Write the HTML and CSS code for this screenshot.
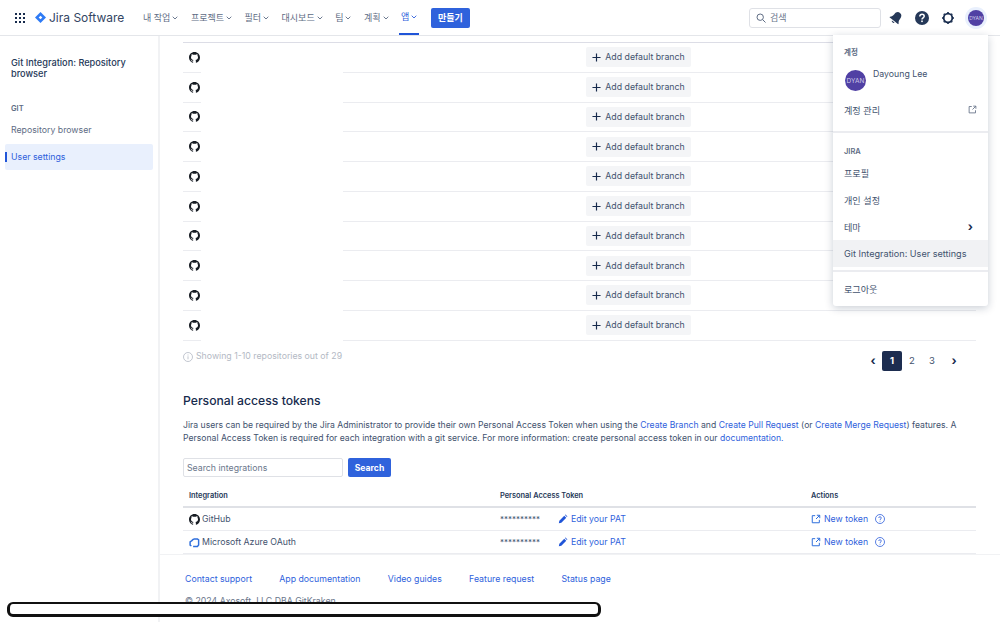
FILE: index.html
```html
<!DOCTYPE html>
<html lang="ko">
<head>
  <meta charset="UTF-8" />
  <title>Git Integration: User settings</title>
  <link rel="stylesheet" href="styles.css">
</head>
<body>
  <svg class="defs" width="0" height="0">
    <symbol id="gh" viewBox="0 0 16 16"><path d="M8 0C3.58 0 0 3.58 0 8c0 3.54 2.29 6.53 5.47 7.59.4.07.55-.17.55-.38 0-.19-.01-.82-.01-1.49-2.01.37-2.53-.49-2.69-.94-.09-.23-.48-.94-.82-1.13-.28-.15-.68-.52-.01-.53.63-.01 1.08.58 1.23.82.72 1.21 1.87.87 2.33.66.07-.52.28-.87.51-1.07-1.78-.2-3.64-.89-3.64-3.95 0-.87.31-1.59.82-2.15-.08-.2-.36-1.02.08-2.12 0 0 .67-.21 2.2.82.64-.18 1.32-.27 2-.27.68 0 1.36.09 2 .27 1.53-1.04 2.2-.82 2.2-.82.44 1.1.16 1.92.08 2.12.51.56.82 1.27.82 2.15 0 3.07-1.87 3.75-3.65 3.95.29.25.54.73.54 1.48 0 1.07-.01 1.93-.01 2.2 0 .21.15.46.55.38A8.013 8.013 0 0016 8c0-4.42-3.58-8-8-8z"/></symbol>
    <symbol id="chev" viewBox="0 0 6 6"><path d="M.7 1.700L3 4l2.300-2.300" fill="none" stroke="currentColor" stroke-width="0.9"/></symbol>
    <symbol id="ext" viewBox="0 0 12 12"><path d="M5 2H1.500v8.500H10V7M7 1.500h3.500V5M10.500 1.500L6 6" fill="none" stroke="currentColor" stroke-width="1.200"/></symbol>
    <symbol id="pen" viewBox="0 0 12 12"><path d="M1 11l.6-3L7.500 2.100 9.900 4.500 4 10.400zM8.300 1.300l.8-.6 2.200 2.200-.6.8z"/></symbol>
    <symbol id="plus" viewBox="0 0 10 10"><path d="M5 .5v9M.5 5h9" fill="none" stroke="currentColor" stroke-width="1.300"/></symbol>
  </svg>

  <header class="topbar">
    <svg class="apps" width="10" height="10" viewBox="0 0 10 10" fill="#172b4d"><rect width="2" height="2"/><rect x="4" width="2" height="2"/><rect x="8" width="2" height="2"/><rect y="4" width="2" height="2"/><rect x="4" y="4" width="2" height="2"/><rect x="8" y="4" width="2" height="2"/><rect y="8" width="2" height="2"/><rect x="4" y="8" width="2" height="2"/><rect x="8" y="8" width="2" height="2"/></svg>
    <div class="logo">
      <svg width="11" height="11" viewBox="0 0 12 12"><path d="M6 0l6 6-6 6-6-6z" fill="#2f7bf5"/><path d="M6 4L8 6 6 8 4 6z" fill="#fff"/></svg>
      <span>Jira Software</span>
    </div>
    <nav class="nav">
      <a>내 작업<svg><use href="#chev"/></svg></a>
      <a>프로젝트<svg><use href="#chev"/></svg></a>
      <a>필터<svg><use href="#chev"/></svg></a>
      <a>대시보드<svg><use href="#chev"/></svg></a>
      <a>팀<svg><use href="#chev"/></svg></a>
      <a>계획<svg><use href="#chev"/></svg></a>
      <a class="active">앱<svg><use href="#chev"/></svg></a>
    </nav>
    <button class="create">만들기</button>
    <div class="topright">
      <div class="search">
        <svg width="10" height="10" viewBox="0 0 10 10" fill="none" stroke="#5e6c84" stroke-width="1"><circle cx="4.200" cy="4.200" r="3.200"/><path d="M6.600 6.600L9.500 9.500"/></svg>
        <span>검색</span>
      </div>
      <svg class="ticon" width="14" height="14" viewBox="0 0 14 14" fill="#253858"><g transform="rotate(38 7 7)"><path d="M7 .5c2.600 0 3.700 2.200 3.700 4.500 0 2.200.5 3.400 1.800 4.700v.8H1.500v-.8C2.800 8.400 3.300 7.200 3.300 5 3.300 2.700 4.400.5 7 .5z"/><path d="M5.300 11.500h3.400C8.500 13 5.500 13 5.300 11.500z"/></g></svg>
      <svg class="ticon" width="14" height="14" viewBox="0 0 14 14"><circle cx="7" cy="7" r="7" fill="#253858"/><path d="M4.800 5.500C4.800 4.200 5.800 3.300 7 3.300s2.200.9 2.200 2C9.200 6.800 7 6.900 7 8.500" fill="none" stroke="#fff" stroke-width="1.500"/><rect x="6.200" y="9.500" width="1.600" height="1.600" fill="#fff"/></svg>
      <svg class="ticon" width="14" height="14" viewBox="0 0 14 14" fill="none" stroke="#172b4d"><circle cx="7" cy="7" r="4.300" stroke-width="1.800"/><path stroke-width="1.600" d="M7 1v1.200M7 11.800V13M1 7h1.200M11.800 7H13M2.800 2.800l.8.8M10.400 10.400l.8.8M2.800 11.200l.8-.8M10.400 3.600l.8-.8"/></svg>
      <div class="halo"><div class="avatar small">DYAN</div></div>
    </div>
  </header>

  <div class="layout">
    <aside class="sidebar">
      <h3 class="side-title">Git Integration: Repository browser</h3>
      <div class="side-label">GIT</div>
      <a class="side-link">Repository browser</a>
      <a class="side-link current">User settings</a>
    </aside>

    <div class="page">
      <main class="content">
        <div class="repos">
          <div class="repo"><div class="ic"><svg><use href="#gh"/></svg></div><div class="blank"></div><div class="act"><button class="add"><svg><use href="#plus"/></svg>Add default branch</button></div></div>
          <div class="repo"><div class="ic"><svg><use href="#gh"/></svg></div><div class="blank"></div><div class="act"><button class="add"><svg><use href="#plus"/></svg>Add default branch</button></div></div>
          <div class="repo"><div class="ic"><svg><use href="#gh"/></svg></div><div class="blank"></div><div class="act"><button class="add"><svg><use href="#plus"/></svg>Add default branch</button></div></div>
          <div class="repo"><div class="ic"><svg><use href="#gh"/></svg></div><div class="blank"></div><div class="act"><button class="add"><svg><use href="#plus"/></svg>Add default branch</button></div></div>
          <div class="repo"><div class="ic"><svg><use href="#gh"/></svg></div><div class="blank"></div><div class="act"><button class="add"><svg><use href="#plus"/></svg>Add default branch</button></div></div>
          <div class="repo"><div class="ic"><svg><use href="#gh"/></svg></div><div class="blank"></div><div class="act"><button class="add"><svg><use href="#plus"/></svg>Add default branch</button></div></div>
          <div class="repo"><div class="ic"><svg><use href="#gh"/></svg></div><div class="blank"></div><div class="act"><button class="add"><svg><use href="#plus"/></svg>Add default branch</button></div></div>
          <div class="repo"><div class="ic"><svg><use href="#gh"/></svg></div><div class="blank"></div><div class="act"><button class="add"><svg><use href="#plus"/></svg>Add default branch</button></div></div>
          <div class="repo"><div class="ic"><svg><use href="#gh"/></svg></div><div class="blank"></div><div class="act"><button class="add"><svg><use href="#plus"/></svg>Add default branch</button></div></div>
          <div class="repo"><div class="ic"><svg><use href="#gh"/></svg></div><div class="blank"></div><div class="act"><button class="add"><svg><use href="#plus"/></svg>Add default branch</button></div></div>
        </div>

        <div class="pager-row">
          <div class="showing">
            <svg width="10" height="10" viewBox="0 0 10 10" fill="none" stroke="#b3b9c4" stroke-width="0.8"><circle cx="5" cy="5" r="4.500"/><path d="M5 4.300v3M5 2.500v1"/></svg>
            Showing 1-10 repositories out of 29
          </div>
          <div class="pager">
            <span class="arrow">‹</span>
            <span class="pg on">1</span>
            <span class="pg">2</span>
            <span class="pg">3</span>
            <span class="arrow next">›</span>
          </div>
        </div>

        <h2 class="tokens-title">Personal access tokens</h2>
        <p class="intro">Jira users can be required by the Jira Administrator to provide their own Personal Access Token when using the <a>Create Branch</a> and <a>Create Pull Request</a> (or <a>Create Merge Request</a>) features. A<br>Personal Access Token is required for each integration with a git service. For more information: create personal access token in our <a>documentation.</a></p>

        <div class="searchrow">
          <div class="sinput">Search integrations</div>
          <button class="sbtn">Search</button>
        </div>

        <div class="ttable">
          <div class="trow thead"><div>Integration</div><div>Personal Access Token</div><div>Actions</div></div>
          <div class="trow">
            <div class="tname"><svg class="tlogo"><use href="#gh"/></svg>GitHub</div>
            <div class="pat"><span class="stars">**********</span><a class="edit"><svg><use href="#pen"/></svg>Edit your PAT</a></div>
            <div class="acts"><a class="newt"><svg><use href="#ext"/></svg>New token</a><svg class="qm" width="10" height="10" viewBox="0 0 10 10" fill="none" stroke="#2f5fdc" stroke-width="0.8"><circle cx="5" cy="5" r="4.500"/><path d="M3.700 4c0-.8.6-1.300 1.300-1.300S6.300 3.200 6.300 4C6.300 5 5 5 5 6M5 6.800v.8"/></svg></div>
          </div>
          <div class="trow">
            <div class="tname"><svg class="tlogo azure" viewBox="0 0 12 12"><path d="M5 2.200h4.200l1.300 1v5.600l-1.300 1.500H4.500M2.800 4.200L1.200 5.300v3.500l1.400 1M2.800 4.200L5 2.200"/></svg>Microsoft Azure OAuth</div>
            <div class="pat"><span class="stars">**********</span><a class="edit"><svg><use href="#pen"/></svg>Edit your PAT</a></div>
            <div class="acts"><a class="newt"><svg><use href="#ext"/></svg>New token</a><svg class="qm" width="10" height="10" viewBox="0 0 10 10" fill="none" stroke="#2f5fdc" stroke-width="0.8"><circle cx="5" cy="5" r="4.500"/><path d="M3.700 4c0-.8.6-1.300 1.300-1.300S6.300 3.200 6.300 4C6.300 5 5 5 5 6M5 6.800v.8"/></svg></div>
          </div>
        </div>
      </main>

      <footer class="foot">
        <div class="foot-links"><a>Contact support</a><a>App documentation</a><a>Video guides</a><a>Feature request</a><a>Status page</a></div>
        <div class="copy">© 2024 Axosoft, LLC DBA GitKraken</div>
      </footer>
    </div>
  </div>

  <!-- account menu -->
  <div class="menu">
    <div class="menu-sec first">
      <div class="menu-label">계정</div>
      <div class="profile">
        <div class="avatar big">DYAN</div>
        <div class="pname">Dayoung Lee</div>
      </div>
      <div class="mitem">계정 관리<svg class="mext"><use href="#ext"/></svg></div>
    </div>
    <div class="menu-sec middle">
      <div class="menu-label">JIRA</div>
      <div class="mitem">프로필</div>
      <div class="mitem">개인 설정</div>
      <div class="mitem">테마<span class="mchev">›</span></div>
      <div class="mitem hover">Git Integration: User settings</div>
    </div>
    <div class="menu-sec last">
      <div class="mitem">로그아웃</div>
    </div>
  </div>

  <div class="scrollbar"></div>
</body>
</html>
```

FILE: styles.css
```css
* {
  box-sizing: border-box;
}
html, body {
  height: 100%;
}
body {
  margin: 0;
  height: 622px;
  overflow: hidden;
  font-family: Inter, "Noto Sans CJK KR", sans-serif;
  font-size: 8.75px;
  color: #42526e;
  background: #fff;
  display: flex;
  flex-direction: column;
}
a {
  color: #2f5fdc;
}
button {
  font-family: inherit;
  border: none;
}
.defs {
  position: absolute;
}

/* top bar */
.topbar {
  height: 36px;
  flex: none;
  display: flex;
  align-items: center;
  padding-left: 15px;
  border-bottom: 1px solid #e4e6ea;
}
.logo {
  display: flex;
  align-items: center;
  gap: 3px;
  margin-left: 10px;
  width: 106px;
  font-size: 12px;
  color: #344563;
}
.nav {
  display: flex;
  height: 35px;
}
.nav a {
  display: flex;
  align-items: center;
  gap: 2px;
  padding: 0 2px;
  margin-right: 8.5px;
  font-size: 9px;
  color: #5e6c84;
}
.nav a svg {
  width: 6px;
  height: 6px;
}
.nav a.active {
  color: #2f5fdc;
  border-bottom: 2px solid #2055d8;
}
.create {
  width: 39px;
  height: 20px;
  margin-left: 3px;
  background: #2f62dc;
  color: #fff;
  font-size: 9px;
  font-weight: 600;
  border-radius: 2px;
  padding: 0;
}
.topright {
  margin-left: auto;
  display: flex;
  align-items: center;
  padding-right: 12px;
}
.search {
  width: 132px;
  height: 20px;
  display: flex;
  align-items: center;
  gap: 4px;
  padding-left: 6px;
  border: 1.5px solid #dfe1e6;
  border-radius: 3px;
  margin-right: 8px;
  font-size: 9px;
  color: #6b778c;
}
.ticon {
  margin-right: 12px;
}
.halo {
  width: 22px;
  height: 22px;
  border-radius: 50%;
  background: #e9f0fd;
  display: flex;
  align-items: center;
  justify-content: center;
  margin-left: -2px;
  margin-right: 1px;
}
.avatar {
  flex: none;
  border-radius: 50%;
  background: #5040a4;
  color: #cfc9e8;
  display: flex;
  align-items: center;
  justify-content: center;
}
.avatar.small {
  width: 16px;
  height: 16px;
  font-size: 5px;
}
.avatar.big {
  width: 21px;
  height: 21px;
  font-size: 6.5px;
}

/* sidebar */
.layout {
  flex: 1;
  display: flex;
  min-height: 0;
}
.sidebar {
  width: 160px;
  flex: none;
  padding: 21px 5px 0 5px;
  border-right: 2px solid #f1f2f4;
}
.side-title {
  margin: 0 0 24px 6px;
  font-size: 9.2px;
  line-height: 11px;
  font-weight: 500;
  color: #253858;
}
.side-label {
  margin: 0 0 3px 6px;
  font-size: 7.5px;
  font-weight: 600;
  color: #5e6c84;
  line-height: 11px;
}
.side-link {
  display: flex;
  align-items: center;
  height: 26px;
  padding-left: 6px;
  color: #5e6c84;
  border-radius: 2px;
}
.side-link.current {
  color: #2f5fdc;
  background: #e9f0fd;
  position: relative;
  margin-top: 1px;
}
.side-link.current::before {
  content: "";
  position: absolute;
  left: 0;
  top: 8px;
  width: 2px;
  height: 10px;
  background: #2055d8;
}

/* content */
.page {
  flex: 1;
  min-width: 0;
  display: flex;
  flex-direction: column;
}
.content {
  height: 518px;
  flex: none;
  overflow: hidden;
  padding: 6px 24px 0 23px;
}
.repos {
  border-top: 1px solid #dcdde6;
}
.repo {
  display: flex;
  height: 29.75px;
}
.ic {
  width: 18px;
  flex: none;
  display: flex;
  align-items: center;
  padding-left: 6px;
  border-bottom: 1px solid #ebecf0;
}
.ic svg {
  width: 11px;
  height: 11px;
  fill: #161b22;
}
.blank {
  width: 142px;
  flex: none;
}
.act {
  flex: 1;
  display: flex;
  align-items: center;
  padding-left: 243px;
  border-bottom: 1px solid #ebecf0;
}
.add {
  height: 20px;
  width: 105px;
  display: flex;
  align-items: center;
  justify-content: center;
  gap: 4px;
  padding: 0;
  background: #f4f5f7;
  color: #42526e;
  font-size: 8.75px;
  border-radius: 2px;
}
.add svg {
  width: 9px;
  height: 9px;
  color: #172b4d;
}
.pager-row {
  display: flex;
  justify-content: space-between;
  height: 35px;
  padding-top: 10px;
}
.showing {
  display: flex;
  align-items: flex-start;
  gap: 3px;
  color: #b3b9c4;
}
.showing svg {
  margin-top: 1px;
}
.pager {
  display: flex;
  align-items: flex-start;
  height: 20px;
  margin-right: 10px;
}
.pg {
  width: 20px;
  height: 20px;
  display: flex;
  align-items: center;
  justify-content: center;
  color: #42526e;
  font-size: 9.5px;
}
.pg.on {
  background: #1d2d50;
  color: #fff;
  font-weight: 700;
  border-radius: 2px;
}
.arrow {
  width: 18px;
  height: 20px;
  display: flex;
  align-items: center;
  justify-content: center;
  color: #172b4d;
  font-size: 12px;
  font-weight: 700;
}
.arrow.next {
  width: 24px;
}
.tokens-title {
  margin: 17px 0 0;
  font-size: 12.2px;
  line-height: 16px;
  font-weight: 500;
  color: #172b4d;
}
.intro {
  margin: 10px 0 0;
  font-size: 8.65px;
  line-height: 13.3px;
  color: #42526e;
}
.searchrow {
  display: flex;
  gap: 5px;
  margin-top: 13px;
}
.sinput {
  width: 160px;
  height: 19px;
  display: flex;
  align-items: center;
  padding-left: 3px;
  border: 1px solid #dfe1e6;
  border-radius: 2px;
  color: #6b778c;
}
.sbtn {
  width: 43px;
  height: 19px;
  padding: 0;
  background: #2f62dc;
  color: #fff;
  font-size: 8.6px;
  font-weight: 700;
  border-radius: 2px;
}
.ttable {
  margin-top: 8px;
}
.trow {
  display: grid;
  grid-template-columns: 311px 311px 1fr;
  align-items: center;
  height: 23px;
  padding-left: 6px;
  border-bottom: 1px solid #ebecf0;
}
.trow > div {
  display: flex;
  align-items: center;
}
.thead {
  height: 23px;
  border-bottom: 2px solid #dfe1e6;
  font-size: 7.4px;
  font-weight: 600;
  color: #253858;
}
.tlogo {
  width: 11px;
  height: 11px;
  margin-right: 2px;
  fill: #161b22;
}
.tlogo.azure {
  fill: none;
  stroke: #2f6fdc;
  stroke-width: 1.6;
}
.stars {
  width: 58px;
  color: #42526e;
  font-size: 8px;
}
.edit, .newt {
  display: flex;
  align-items: center;
  gap: 3px;
}
.edit svg {
  width: 10px;
  height: 10px;
  fill: #2055d8;
}
.newt svg {
  width: 10px;
  height: 10px;
  color: #2f6fdc;
}
.qm {
  margin-left: 7px;
}

/* footer */
.foot {
  flex: 1;
  min-height: 0;
  overflow: hidden;
  padding: 18px 0 0 25px;
  border-top: 1px solid #f1f2f4;
}
.foot-links {
  display: flex;
  gap: 27.3px;
  line-height: 12px;
}
.copy {
  margin-top: 10px;
  color: #6b778c;
  line-height: 12px;
}

/* account menu */
.menu {
  position: absolute;
  left: 833px;
  top: 35px;
  width: 155px;
  background: #fff;
  border-radius: 0 0 3px 3px;
  box-shadow: 0 2px 8px rgba(9, 30, 66, 0.22);
}
.menu-sec {
  border-bottom: 2px solid #ebecf0;
}
.menu-sec.first {
  height: 98px;
  padding-top: 12px;
}
.menu-sec.middle {
  height: 139px;
  padding-top: 13px;
}
.menu-sec.middle .menu-label {
  margin-bottom: 3px;
}
.menu-sec.last {
  border: 0;
  padding: 3px 0 4px;
}
.menu-sec.last .mitem {
  height: 27px;
}
.menu-label {
  padding-left: 11px;
  font-size: 7.5px;
  font-weight: 600;
  line-height: 11px;
  color: #5e6c84;
}
.profile {
  display: flex;
  height: 26.6px;
  margin-top: 12px;
  padding-left: 12px;
  gap: 7px;
}
.pname {
  margin-top: -1px;
  color: #42526e;
}
.mitem {
  display: flex;
  align-items: center;
  justify-content: space-between;
  height: 26.7px;
  padding: 0 11px;
  font-size: 9.1px;
  color: #42526e;
}
.mitem.hover {
  background: #f1f2f4;
}
.mext {
  width: 9px;
  height: 9px;
  color: #6b778c;
}
.mchev {
  font-size: 12px;
  font-weight: 700;
  color: #172b4d;
  margin-right: 4px;
}

/* stray scrollbar sitting over the page */
.scrollbar {
  position: absolute;
  left: 7px;
  top: 602px;
  width: 594px;
  height: 15px;
  background: #fff;
  border: 3px solid #111;
  border-top-width: 2px;
  border-radius: 6px;
}
```
